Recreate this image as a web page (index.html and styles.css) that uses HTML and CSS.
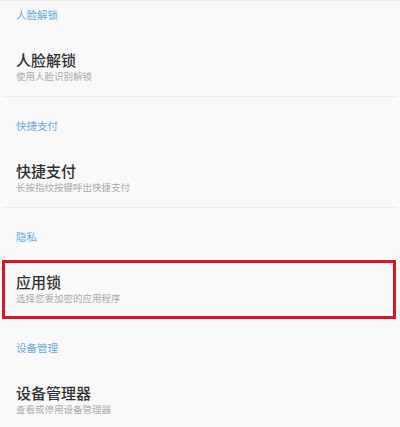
FILE: index.html
```html
<!DOCTYPE html>
<html lang="zh-CN">
<head>
    <meta charset="UTF-8">
    <title>安全设置</title>
    <link rel="stylesheet" href="styles.css">
</head>
<body>
<div class="page">
    <div class="group first">
        <div class="group-title">人脸解锁</div>
        <div class="item">
            <div class="item-title">人脸解锁</div>
            <div class="item-desc">使用人脸识别解锁</div>
        </div>
    </div>
    <div class="group">
        <div class="group-title">快捷支付</div>
        <div class="item">
            <div class="item-title">快捷支付</div>
            <div class="item-desc">长按指纹按键呼出快捷支付</div>
        </div>
    </div>
    <div class="group">
        <div class="group-title">隐私</div>
        <div class="item marked">
            <div class="item-title">应用锁</div>
            <div class="item-desc">选择您要加密的应用程序</div>
        </div>
    </div>
    <div class="group">
        <div class="group-title">设备管理</div>
        <div class="item">
            <div class="item-title">设备管理器</div>
            <div class="item-desc">查看或停用设备管理器</div>
        </div>
    </div>
</div>
</body>
</html>
```

FILE: styles.css
```css
body, div {
    margin: 0;
    padding: 0;
}

body {
    background: #f9f9f9;
    font-family: "Noto Sans CJK SC", "Noto Sans", sans-serif;
    color: #333;
}

.page {
    width: 400px;
    height: 427px;
    overflow: hidden;
    border-top: 1px solid #eeeeee;
}

.group {
    border-top: 1px solid #ececec;
    margin: 0 3px;
}

.group.first {
    border-top: 0;
}

.group-title {
    padding: 22px 13px 0;
    font-size: 10.5px;
    line-height: 14px;
    color: #62a9dc;
}

.group.first .group-title {
    padding-top: 7px;
}

.item {
    padding: 28px 13px 14px;
    position: relative;
}

.item-title {
    font-size: 15px;
    line-height: 20px;
    font-weight: 500;
    color: #2f2f2f;
}

.item-desc {
    font-size: 9.5px;
    line-height: 12px;
    color: #a9a9a9;
}

/* annotation frame */
.item.marked::after {
    content: "";
    position: absolute;
    left: -1px;
    right: 1px;
    top: 16px;
    bottom: -1px;
    border: 3px solid #dc1620;
}
```
